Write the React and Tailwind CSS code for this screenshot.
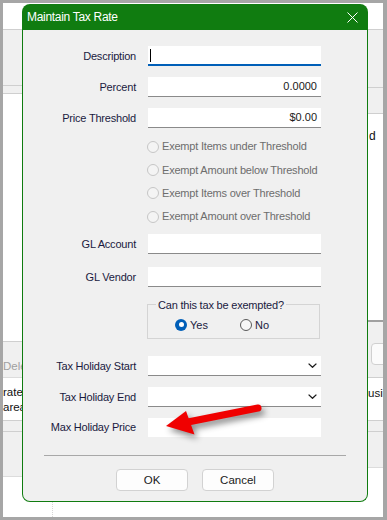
import React from 'react';

const font = { fontFamily: '"Liberation Sans", Arial, sans-serif' };

function Label({ children }) {
  return <div className="text-right text-[11px] tracking-[-0.2px] text-[#1a1a40] whitespace-nowrap">{children}</div>;
}

function Row({ label, className = '', children }) {
  return (
    <div className={`grid grid-cols-[113px_173px] gap-x-[12px] items-center ${className}`}>
      <Label>{label}</Label>
      {children}
    </div>
  );
}

function Box({ children, line = 'border-b border-[#8a8a8a]', h = 'h-[20px]' }) {
  return (
    <div className={`${h} bg-white ${line} flex items-center justify-end pr-[4px] text-[11px] text-[#1a1a1a]`}>
      {children}
    </div>
  );
}

function Chevron() {
  return (
    <svg width="9" height="5" viewBox="0 0 9 5">
      <path d="M0.6 0.6 L4.5 4.3 L8.4 0.6" fill="none" stroke="#1a1a1a" strokeWidth="1.3" />
    </svg>
  );
}

function DisabledRadio({ children }) {
  return (
    <div className="h-[23.33px] flex items-center">
      <div className="w-[12px] h-[12px] rounded-full border border-[#c6c6c6] bg-[#f4f4f4]" />
      <span className="ml-[3px] text-[11px] tracking-[-0.2px] text-[#6d6d6d] whitespace-nowrap">{children}</span>
    </div>
  );
}

function Arrow() {
  return (
    <svg
      width="125"
      height="50"
      viewBox="0 0 125 50"
      className="absolute left-[147px] top-[392px] drop-shadow-[3px_4px_3px_rgba(0,0,0,0.45)]"
    >
      <line x1="108" y1="13" x2="38" y2="27" stroke="#f00000" strokeWidth="7" strokeLinecap="round" />
      <polygon points="16,31 36,16 44.5,39.5" fill="#f00000" />
    </svg>
  );
}

export default function App() {
  return (
    <div style={font} className="w-[387px] h-[520px] bg-white border-t-[3px] border-l-[3px] border-r-[4px] border-b-[3px] border-[#a6a6a6] relative overflow-hidden">
      {/* app behind the dialog */}
      <div className="flex h-full">
        <div className="w-[19px] flex flex-col overflow-hidden">
          <div className="h-[27px] shrink-0 border-b border-[#cfcfcf]" />
          <div className="h-[56px] shrink-0 bg-[#f0f0f0] border-b border-[#cfcfcf]" />
          <div className="h-[8px] shrink-0 bg-[#f0f0f0] border-b border-[#cfcfcf]" />
          <div className="h-[248px] shrink-0 border-b border-[#cfcfcf]" />
          <div className="h-[36px] shrink-0 bg-[#f0f0f0] border-b border-[#dcdcdc] pt-[16px] text-[11.5px] text-[#a0a0a0] whitespace-nowrap">
            <span>Dele</span>
          </div>
          <div className="h-[43px] shrink-0 border-b border-[#cfcfcf] pt-[7px] text-[11.5px] leading-[15px] text-[#111] whitespace-nowrap">
            <div>rate</div>
            <div>area</div>
          </div>
          <div className="h-[11px] shrink-0 bg-[#f0f0f0] border-b border-[#cfcfcf]" />
          <div className="h-[45px] shrink-0 bg-[#f0f0f0] border-b border-[#dcdcdc]" />
        </div>

        <div className="w-[346px] flex flex-col">
          <div className="mt-auto h-[40px] ml-[30px] border-l border-dotted border-[#d6d6d6]" />
        </div>

        <div className="w-[15px] flex flex-col overflow-hidden">
          <div className="h-[27px] shrink-0 border-b border-[#cfcfcf]" />
          <div className="h-[58px] shrink-0 bg-[#f0f0f0] border-b border-[#cfcfcf]" />
          <div className="h-[26px] shrink-0 bg-[#f0f0f0] border-b border-[#cfcfcf]" />
          <div className="h-[206px] shrink-0 pt-[13px] pl-[1px] text-[12px] text-[#111]">d</div>
          <div className="h-[2px] shrink-0 bg-[#a0a0a0]" />
          <div className="h-[56px] shrink-0 bg-[#f0f0f0] border-b border-[#cfcfcf] pt-[21px] pl-[3px]">
            <div className="h-[22px] w-[30px] bg-[#fbfbfb] border border-[#d0d0d0] rounded-[4px]" />
          </div>
          <div className="h-[43px] shrink-0 border-b border-[#cfcfcf] pt-[7px] text-[11.5px] text-[#111] whitespace-nowrap">
            <span>usin</span>
          </div>
          <div className="h-[11px] shrink-0 bg-[#f0f0f0] border-b border-[#cfcfcf]" />
          <div className="h-[36px] shrink-0 bg-[#f0f0f0] border-b border-[#dcdcdc]" />
        </div>
      </div>

      {/* dialog */}
      <div className="absolute left-[19px] top-[1px] w-[346px] h-[498px] flex flex-col">
        <div className="h-[26px] shrink-0 bg-[#107c10] rounded-t-[8px] flex items-center justify-between pl-[5px] pr-[10px]">
          <span className="text-white text-[12px] tracking-[-0.3px]">Maintain Tax Rate</span>
          <svg width="11" height="11" viewBox="0 0 11 11">
            <path d="M0.5 0.5 L10.5 10.5 M10.5 0.5 L0.5 10.5" stroke="#fff" strokeWidth="1" />
          </svg>
        </div>
        <div className="flex-1 bg-[#f0f0f0] border-x border-b border-[#107c10] rounded-b-[8px] flex flex-col">
          <Row label="Description" className="mt-[16px]">
            <Box line="border-b-2 border-[#005fb8]">
              <div className="mr-auto ml-[2px] w-px h-[13px] bg-black" />
            </Box>
          </Row>
          <Row label="Percent" className="mt-[11px]">
            <Box>0.0000</Box>
          </Row>
          <Row label="Price Threshold" className="mt-[11px]">
            <Box>$0.00</Box>
          </Row>

          <div className="mt-[7px] ml-[124px] flex flex-col">
            <DisabledRadio>Exempt Items under Threshold</DisabledRadio>
            <DisabledRadio>Exempt Amount below Threshold</DisabledRadio>
            <DisabledRadio>Exempt Items over Threshold</DisabledRadio>
            <DisabledRadio>Exempt Amount over Threshold</DisabledRadio>
          </div>

          <Row label="GL Account" className="mt-[6px]">
            <Box />
          </Row>
          <Row label="GL Vendor" className="mt-[12.5px]">
            <Box />
          </Row>

          <div className="mt-[11px] ml-[124px] w-[173px]">
            <fieldset className="h-[41.5px] border border-[#d4d4d4] px-0">
              <legend className="ml-[8px] px-[2px] text-[11px] leading-[14px] tracking-[-0.2px] text-[#1a1a40]">
                Can this tax be exempted?
              </legend>
              <div className="h-[20px] mt-[3px] flex items-center text-[11px] text-[#1a1a40]">
                <div className="ml-[27px] w-[12px] h-[12px] rounded-full bg-[#005fb8] flex items-center justify-center">
                  <div className="w-[5px] h-[5px] rounded-full bg-white" />
                </div>
                <span className="ml-[3px]">Yes</span>
                <div className="ml-[32px] w-[12px] h-[12px] rounded-full border border-[#5a5a5a] bg-[#f7f7f7]" />
                <span className="ml-[3px]">No</span>
              </div>
            </fieldset>
          </div>

          <Row label="Tax Holiday Start" className="mt-[16.5px]">
            <Box><Chevron /></Box>
          </Row>
          <Row label="Tax Holiday End" className="mt-[11px]">
            <Box><Chevron /></Box>
          </Row>
          <Row label="Max Holiday Price" className="mt-[11px]">
            <Box line="" h="h-[19px]" />
          </Row>

          <div className="mt-[18.5px] mx-[21px] h-px bg-[#a8a8a8]" />

          <div className="mt-[13px] flex justify-center gap-[14px]">
            <button className="w-[72px] h-[22px] bg-[#fdfdfd] border border-[#d2d2d2] rounded-[4px] text-[11.5px] text-[#1a1a1a]">OK</button>
            <button className="w-[72px] h-[22px] bg-[#fdfdfd] border border-[#d2d2d2] rounded-[4px] text-[11.5px] text-[#1a1a1a]">Cancel</button>
          </div>
        </div>
      </div>

      <Arrow />
    </div>
  );
}
